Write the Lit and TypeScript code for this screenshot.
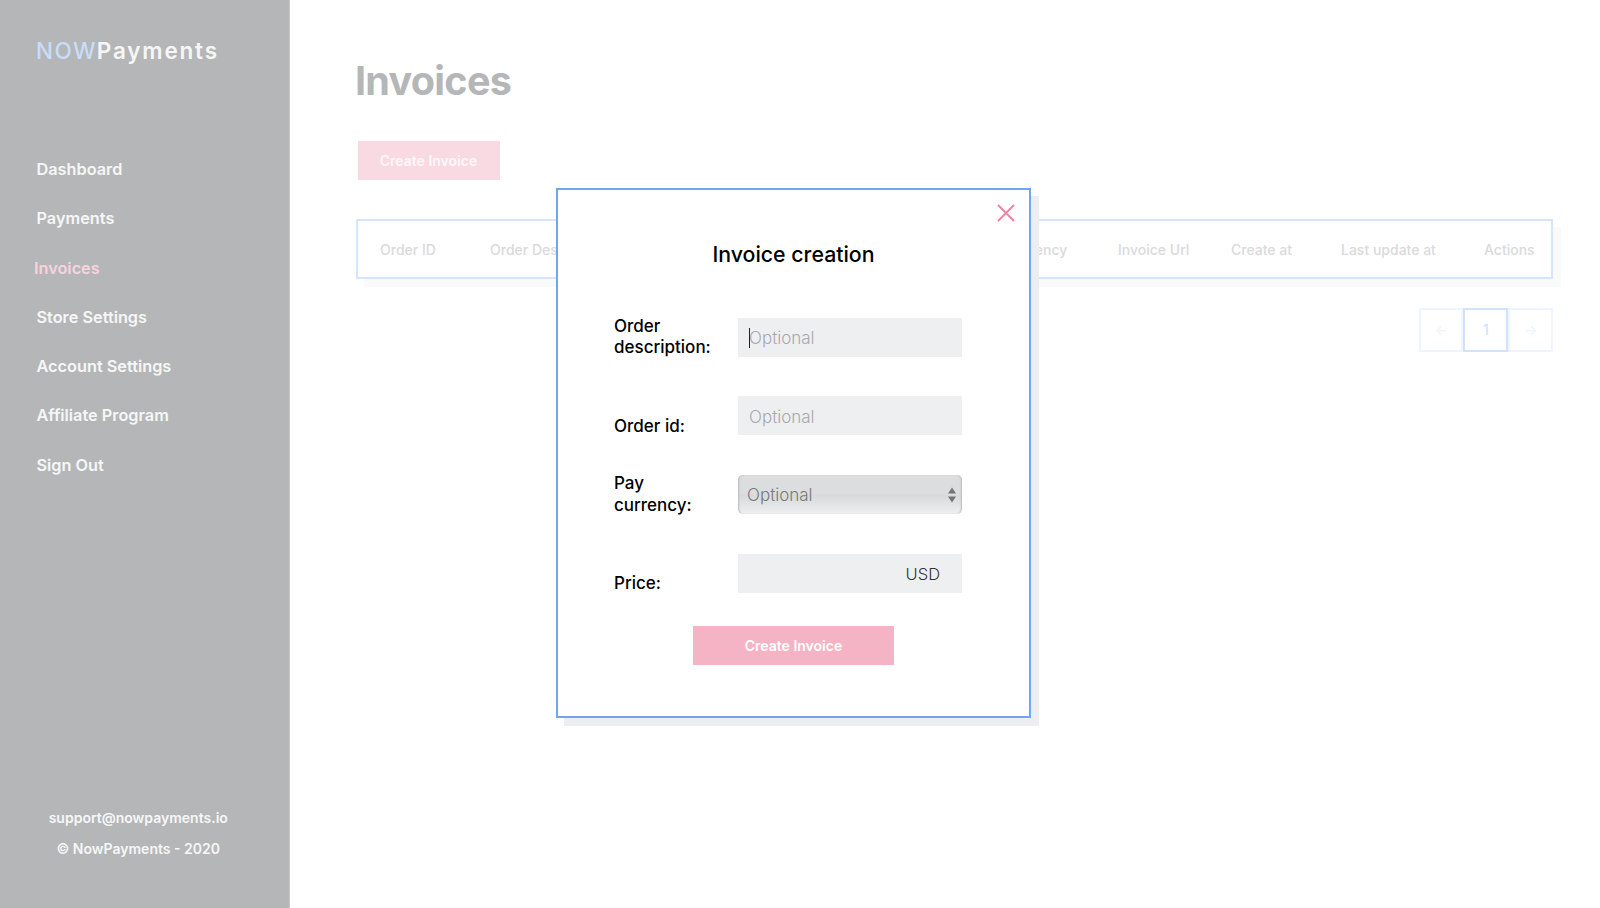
import { LitElement, html, css } from "lit";
import { customElement } from "lit/decorators.js";

const NAV = ["Dashboard", "Payments", "Invoices", "Store Settings", "Account Settings", "Affiliate Program", "Sign Out"];
const COLS = ["Order ID", "Order Description", "Price", "Pay Currency", "Invoice Url", "Create at", "Last update at", "Actions"];

@customElement("app-root")
export class AppRoot extends LitElement {
  static styles = css`
    :host { display: block; height: 908px; overflow: hidden; position: relative; background: #fff;
      font-family: Inter, "Liberation Sans", sans-serif; }
    * { box-sizing: border-box; }
    .page { display: flex; height: 908px; }
    .side { width: 289.5px; flex: none; background: #b5b6b8; border-right: 1px solid #c6c7c9; display: flex; flex-direction: column; color: #f6f6f7; }
    .logo { margin: 36px 0 0 36px; font-size: 22.5px; font-weight: 600; line-height: 30px; letter-spacing: 1.8px; }
    .logo span { color: #c9dcf9; font-weight: 500; letter-spacing: 1.4px; }
    .nav { display: flex; flex-direction: column; margin: 91px 0 0 36.5px; gap: 25.3px; }
    .nav a { font-size: 16.3px; font-weight: 600; line-height: 24px; }
    .nav a.on { color: #f8d3de; margin-left: -2.5px; }
    .foot { margin-top: auto; padding: 0 12px 51px 0; text-align: center; font-size: 14px; font-weight: 600; display: flex; flex-direction: column; gap: 14px; line-height: 17px; }
    .main { flex: 1; padding: 56px 47px 0 66px; min-width: 0; }
    h1 { margin: 0 0 0 -0.5px; font-size: 39.6px; font-weight: 650; line-height: 50px; color: #b5b6b8; letter-spacing: -0.75px; }
    .create { display: block; margin: 35px 0 0 2px; width: 142px; height: 39px; border: 0; background: #f9d9e2; color: #fef8fa; font: 600 14px Inter, sans-serif; }
    .table { position: relative; margin-top: 38.5px; height: 60px; border: 2px solid #d5e5fd; background: #fff; box-shadow: 8px 8px 0 #fafafa; display: grid; grid-template-columns: 110px 220px 267px 141px 113px 110px 143px auto; align-items: center; padding: 2px 0 0 22.5px; font-size: 14px; font-weight: 500; color: #dadadb; }
    .pager { display: flex; justify-content: flex-end; margin-top: 29px; }
    .pager div { width: 44.8px; height: 44px; border: 2px solid #eef5fe; display: flex; align-items: center; justify-content: center; font-size: 14px; font-weight: 500; color: #eef5fe; }
    .pager div.on { border-color: #d1e3fc; color: #d1e3fc; }

    .modal { position: absolute; left: 556px; top: 188px; width: 475px; height: 530px; background: #fff; border: 2px solid #6ea6f7; box-shadow: 8px 8px 0 #eceeef; padding: 48.5px 68px 0 56px; }
    .close { position: absolute; right: 14px; top: 14px; width: 18px; height: 18px; display: block; }
    h2 { margin: 0 -68px 0 -56px; text-align: center; font-size: 21.3px; font-weight: 500; line-height: 30px; color: #000; }
    .form { margin-top: 49px; display: grid; grid-template-columns: 124px 224px; grid-auto-rows: 39px; row-gap: 39.7px; align-items: end; }
    label { font-size: 17px; font-weight: 500; line-height: 21.3px; color: #000; margin-bottom: -2px; }
    .field { position: relative; height: 39px; }
    input { width: 100%; height: 100%; border: 0; background: #eeeff1; padding: 2px 11px 0; font: 400 17px Inter, sans-serif; color: #333; outline: 0; display: block; }
    input::placeholder { color: #a8aaad; opacity: 1; font-weight: 300; }
    .caret { position: absolute; left: 11px; top: 10px; width: 1px; height: 20px; background: #222; }
    .unit { position: absolute; right: 22px; top: 10px; font-size: 16.5px; line-height: 21px; font-weight: 300; color: #333; }
    select { appearance: none; -webkit-appearance: none; width: 100%; height: 100%; display: block; border: 0; border-radius: 5px; padding: 2px 9px 0; font: 300 17px Inter, sans-serif; color: #77797c;
      background: linear-gradient(#dcdddf 0, #dcdddf 48%, #d8d9db 52%, #eeeff0 100%);
      box-shadow: inset 2px 0 2px -1px #bbbcbf, inset -2px 0 2px -1px #bbbcbf; }
    .arrows { position: absolute; right: 5px; top: 12px; width: 10px; height: 16px; pointer-events: none; }
    .submit { display: block; margin: 33.5px 0 0 79px; width: 201px; height: 39px; border: 0; background: #f5b4c5; color: #fff; font: 600 14px Inter, sans-serif; }
  `;

  render() {
    return html`
      <div class="page">
        <aside class="side">
          <div class="logo"><span>NOW</span>Payments</div>
          <nav class="nav">
            ${NAV.map((n) => html`<a class=${n === "Invoices" ? "on" : ""}>${n}</a>`)}
          </nav>
          <div class="foot">
            <div>support@nowpayments.io</div>
            <div>© NowPayments - 2020</div>
          </div>
        </aside>
        <main class="main">
          <h1>Invoices</h1>
          <button class="create">Create Invoice</button>
          <div class="table">${COLS.map((c) => html`<div>${c}</div>`)}</div>
          <div class="pager"><div>←</div><div class="on">1</div><div>→</div></div>
        </main>
      </div>
      <section class="modal">
        <svg class="close" viewBox="0 0 18 18" fill="none" stroke="#f2809f" stroke-width="1.8"><path d="M1 1 L17 17 M17 1 L1 17" /></svg>
        <h2>Invoice creation</h2>
        <div class="form">
          <label>Order<br />description:</label>
          <div class="field"><input placeholder="Optional" /><span class="caret"></span></div>
          <label>Order id:</label>
          <div class="field"><input placeholder="Optional" /></div>
          <label>Pay<br />currency:</label>
          <div class="field">
            <select><option>Optional</option></select>
            <svg class="arrows" viewBox="0 0 10 16" fill="#737578"><path d="M5 0.5 L9 6.5 H1 Z M1 9.5 H9 L5 15.5 Z" /></svg>
          </div>
          <label>Price:</label>
          <div class="field"><input /><span class="unit">USD</span></div>
        </div>
        <button class="submit">Create Invoice</button>
      </section>
    `;
  }
}
